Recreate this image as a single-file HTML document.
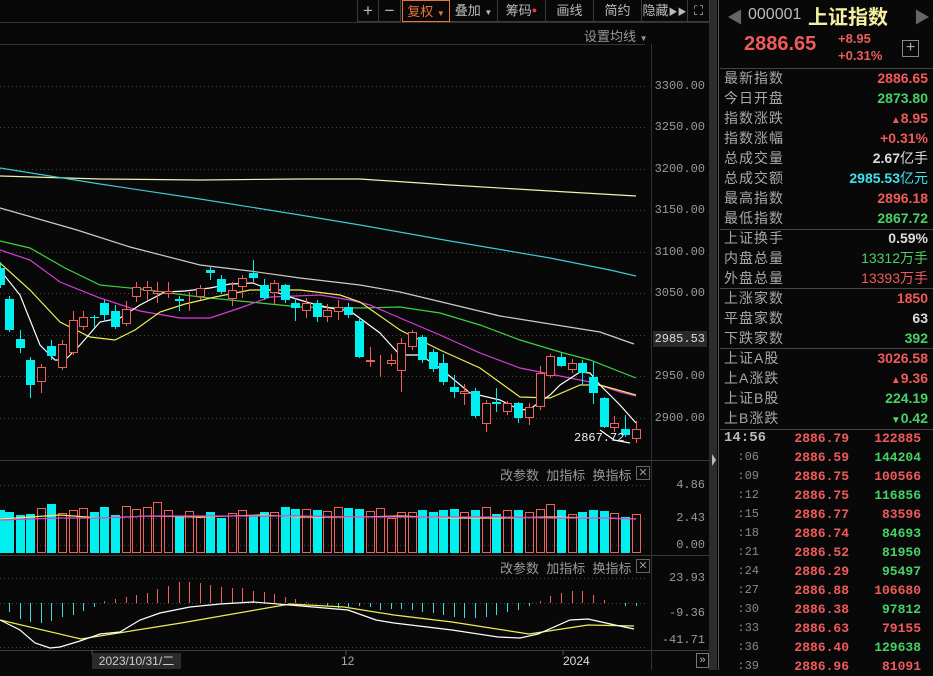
<!DOCTYPE html>
<html><head><meta charset="utf-8"><style>
*{margin:0;padding:0;box-sizing:border-box}
body{width:933px;height:670px;background:#080808;overflow:hidden;position:relative;font-family:"Liberation Sans","Noto Sans CJK SC",sans-serif;color:#aaa}
.a{position:absolute;white-space:nowrap}
.tb{position:absolute;top:0;height:22px;border-right:1px solid #3a3a3a;border-bottom:1px solid #3a3a3a;font-size:13px;color:#bbb;text-align:center;line-height:21px}
.r{position:absolute;left:718px;width:215px;height:20px;font-size:14px;line-height:20px}
.r .l{position:absolute;left:6px;color:#a8a8a8;letter-spacing:1px}
.r .v{position:absolute;right:5px;font-weight:bold}
.red{color:#f05a5a}.grn{color:#46d267}.cy{color:#3fe3ee}.wh{color:#ddd}
.t{position:absolute;left:718px;width:215px;height:19px;font-size:13px;line-height:19px;font-family:"Liberation Mono",monospace}
.t span{position:absolute}
.sep{position:absolute;left:720px;width:213px;height:1px;background:#444}
.ax{position:absolute;right:228px;font-family:"Liberation Mono",monospace;font-size:12px;color:#9a9a9a}
.btn{font-size:13px;color:#9a9a9a;position:absolute}
</style></head><body>
<svg id="s" width="933" height="670" style="position:absolute;left:0;top:0"></svg>

<!-- toolbar -->
<div class="tb" style="left:357px;width:22px;border-left:1px solid #3a3a3a;font-size:17px">+</div>
<div class="tb" style="left:379px;width:22px;font-size:17px">−</div>
<div class="tb" style="left:402px;width:48px;color:#e8753a;border:1px solid #e8753a">复权 <span style="font-size:8px">▼</span></div>
<div class="tb" style="left:450px;width:48px">叠加 <span style="font-size:8px">▼</span></div>
<div class="tb" style="left:498px;width:48px">筹码<span style="color:#f33;font-size:9px;vertical-align:top">●</span></div>
<div class="tb" style="left:546px;width:48px">画线</div>
<div class="tb" style="left:594px;width:48px">简约</div>
<div class="tb" style="left:642px;width:46px">隐藏<span style="font-size:9px">▶▶</span></div>
<div class="tb" style="left:688px;width:22px;font-size:13px">⛶</div>
<div class="a" style="left:584px;top:26px;font-size:13px;color:#9a9a9a">设置均线 <span style="font-size:8px">▼</span></div>

<!-- axis labels -->
<div class="ax" style="top:79px">3300.00</div>
<div class="ax" style="top:120px">3250.00</div>
<div class="ax" style="top:162px">3200.00</div>
<div class="ax" style="top:203px">3150.00</div>
<div class="ax" style="top:245px">3100.00</div>
<div class="ax" style="top:286px">3050.00</div>
<div class="a" style="left:653px;top:331px;width:54px;height:16px;background:#2a2a2a;font-family:'Liberation Mono',monospace;font-size:12px;color:#ddd;text-align:right;padding-right:2px;line-height:16px">2985.53</div>
<div class="ax" style="top:369px">2950.00</div>
<div class="ax" style="top:411px">2900.00</div>
<div class="a" style="left:574px;top:431px;font-family:'Liberation Mono',monospace;font-size:12px;color:#eee">2867.72</div>
<div class="ax" style="top:478px">4.86</div>
<div class="ax" style="top:511px">2.43</div>
<div class="ax" style="top:538px">0.00</div>
<div class="ax" style="top:571px">23.93</div>
<div class="ax" style="top:606px">-9.36</div>
<div class="ax" style="top:633px">-41.71</div>

<div class="btn" style="left:500px;top:465px">改参数 &nbsp;加指标 &nbsp;换指标</div>
<div class="a" style="left:636px;top:466px;width:14px;height:14px;border:1px solid #666;font-size:11px;line-height:12px;text-align:center;color:#999">✕</div>
<div class="btn" style="left:500px;top:558px">改参数 &nbsp;加指标 &nbsp;换指标</div>
<div class="a" style="left:636px;top:559px;width:14px;height:14px;border:1px solid #666;font-size:11px;line-height:12px;text-align:center;color:#999">✕</div>

<div class="a" style="left:92px;top:653px;width:89px;height:16px;background:#2b2b2b;font-size:12px;color:#ccc;text-align:center;line-height:16px">2023/10/31/二</div>
<div class="a" style="left:341px;top:654px;font-size:12px;color:#aaa">12</div>
<div class="a" style="left:563px;top:654px;font-size:12px;color:#ddd">2024</div>
<div class="a" style="left:696px;top:653px;width:13px;height:15px;border:1px solid #777;font-size:11px;line-height:13px;color:#bbb;text-align:center">»</div>

<!-- right panel -->
<div class="a" style="left:727px;top:4px;font-size:16px;color:#666">◀</div>
<div class="a" style="left:748px;top:6px;font-size:16px;color:#bbb;font-family:'Liberation Sans',sans-serif">000001</div>
<div class="a" style="left:808px;top:1px;font-size:20px;color:#f4f0a0;font-weight:bold">上证指数</div>
<div class="a" style="left:914px;top:4px;font-size:16px;color:#666">▶</div>
<div class="a" style="left:744px;top:33px;font-size:20px;color:#f05a5a;font-weight:bold">2886.65</div>
<div class="a" style="left:838px;top:30px;font-size:13px;color:#f05a5a;font-weight:bold;line-height:17px">+8.95<br>+0.31%</div>
<div class="a" style="left:902px;top:40px;width:17px;height:17px;border:1px solid #888;color:#aaa;font-size:16px;line-height:14px;text-align:center">+</div>
<div class="sep" style="top:68px"></div>
<div class="r" style="top:68px"><span class="l">最新指数</span><span class="v red">2886.65</span></div>
<div class="r" style="top:88px"><span class="l">今日开盘</span><span class="v grn">2873.80</span></div>
<div class="r" style="top:108px"><span class="l">指数涨跌</span><span class="v red"><span style="font-size:10px">▲</span>8.95</span></div>
<div class="r" style="top:128px"><span class="l">指数涨幅</span><span class="v red">+0.31%</span></div>
<div class="r" style="top:148px"><span class="l">总成交量</span><span class="v wh">2.67<span style="font-weight:normal">亿手</span></span></div>
<div class="r" style="top:168px"><span class="l">总成交额</span><span class="v cy">2985.53<span style="font-weight:normal">亿元</span></span></div>
<div class="r" style="top:188px"><span class="l">最高指数</span><span class="v red">2896.18</span></div>
<div class="r" style="top:208px"><span class="l">最低指数</span><span class="v grn">2867.72</span></div>
<div class="sep" style="top:229px"></div>
<div class="r" style="top:228px"><span class="l">上证换手</span><span class="v wh">0.59%</span></div>
<div class="r" style="top:248px"><span class="l">内盘总量</span><span class="v grn" style="font-weight:normal">13312万手</span></div>
<div class="r" style="top:268px"><span class="l">外盘总量</span><span class="v red" style="font-weight:normal">13393万手</span></div>
<div class="sep" style="top:288px"></div>
<div class="r" style="top:288px"><span class="l">上涨家数</span><span class="v red">1850</span></div>
<div class="r" style="top:308px"><span class="l">平盘家数</span><span class="v wh">63</span></div>
<div class="r" style="top:328px"><span class="l">下跌家数</span><span class="v grn">392</span></div>
<div class="sep" style="top:348px"></div>
<div class="r" style="top:348px"><span class="l">上证A股</span><span class="v red">3026.58</span></div>
<div class="r" style="top:368px"><span class="l">上A涨跌</span><span class="v red"><span style="font-size:10px">▲</span>9.36</span></div>
<div class="r" style="top:388px"><span class="l">上证B股</span><span class="v grn">224.19</span></div>
<div class="r" style="top:408px"><span class="l">上B涨跌</span><span class="v grn"><span style="font-size:10px">▼</span>0.42</span></div>
<div class="sep" style="top:429px"></div>
<div id="ticks"></div>

<script>
var s=document.getElementById('s'),h='';
function L(x1,y1,x2,y2,c,w,d){h+='<line x1="'+x1+'" y1="'+y1+'" x2="'+x2+'" y2="'+y2+'" stroke="'+c+'" stroke-width="'+(w||1)+'"'+(d?' stroke-dasharray="'+d+'"':'')+'/>';}
function P(pts,c){h+='<polyline fill="none" stroke="'+c+'" stroke-width="1.2" points="'+pts+'"/>';}
// frame lines
L(0,22.5,710,22.5,'#333');L(0,44.5,645,44.5,'#333');
L(651.5,44,651.5,670,'#333');
L(0,460.5,710,460.5,'#3a3a3a');L(0,555.5,710,555.5,'#3a3a3a');L(0,650.5,710,650.5,'#3a3a3a');
h+='<rect x="709" y="0" width="8" height="670" fill="#2c2c2c"/>';
h+='<polygon points="712,454 716,460 712,466" fill="#bbb"/>';
L(718.5,0,718.5,670,'#555');
[86,127,169,210,252,293,335,376,418].forEach(function(y){L(0,y+.5,648,y+.5,'#444',1,'1 3');});
[485,518,545,578,603,647].forEach(function(y){L(0,y+.5,648,y+.5,'#444',1,'1 3');});
// MAs
P('0,176 100,179 200,180 300,179 360,179 450,185 550,191 636,196','#f4f0b0');
P('0,168 100,184 200,199 300,215 360,225 450,241 550,258 610,270 636,276','#3fc8d8');
P('0,208 77,230 130,247 200,265 250,271 300,278 360,285 400,292 500,316 600,332 634,344','#ccc');
P('0,241 30,248 65,268 100,285 140,289 200,297 260,303 300,307 360,308 400,307 440,313 480,325 520,340 560,352 590,360 636,378','#3ed23e');
P('0,250 30,260 60,282 100,298 140,311 180,318 210,318 240,308 270,297 320,295 350,300 370,305 400,318 440,335 480,353 520,368 560,376 590,382 620,392 636,396','#d83cd8');
P('0,263 30,290 60,322 90,337 115,340 135,330 160,312 185,304 215,297 250,290 300,290 340,295 360,302 400,330 440,350 480,368 520,397 550,398 580,385 600,385 636,395','#eeee55');
P('0,270 20,295 40,345 55,360 65,360 80,345 100,322 120,318 140,305 165,292 185,291 210,288 230,284 253,283 270,290 290,297 310,303 330,308 350,311 380,333 400,355 420,355 440,368 470,393 500,400 520,410 530,409 550,395 560,385 580,372 590,373 600,385 620,405 636,423','#fff');
// candles: x, top, bottom, up(red), hi, lo
var C=[[0,268,285,0,262,288],[9,299,330,0,296,332],[20,339,348,0,330,353],[30,360,385,0,357,398],[41,367,382,1,364,393],[51,346,356,0,340,360],[62,344,368,1,340,370],[73,320,353,1,311,355],[83,317,327,1,311,330],[94,317,318,0,315,328],[104,303,315,0,300,322],[115,311,327,0,305,329],[126,309,324,1,301,326],[136,287,297,1,282,302],[147,287,291,1,281,300],[157,291,294,1,282,303],[168,291,294,1,282,298],[179,299,301,0,296,311],[189,297,298,1,292,311],[200,288,297,1,285,300],[210,270,273,0,266,280],[221,279,292,0,275,294],[232,290,299,1,282,306],[242,278,287,1,275,298],[253,273,278,0,260,282],[264,285,298,0,279,300],[274,283,293,1,280,304],[285,285,300,0,284,303],[295,303,308,0,298,321],[306,303,311,1,298,318],[317,303,317,0,300,322],[327,310,317,1,304,322],[338,307,312,1,300,320],[348,307,315,0,303,318],[359,321,357,0,318,358],[370,360,362,1,347,367],[380,363,364,1,355,377],[391,360,364,1,354,366],[401,343,371,1,338,392],[412,332,347,1,330,350],[422,337,360,0,335,363],[433,352,369,0,349,372],[443,363,382,0,354,385],[454,387,392,0,375,398],[464,391,394,1,384,405],[475,391,416,0,388,418],[486,403,424,1,400,432],[496,402,404,0,388,412],[507,403,412,1,401,415],[518,403,418,0,402,423],[529,407,418,1,403,425],[540,373,407,1,366,410],[550,356,376,1,354,378],[561,357,366,0,353,367],[572,363,370,1,359,373],[582,363,373,0,360,385],[593,377,393,0,362,404],[604,398,427,0,397,428],[614,423,428,1,416,432],[625,429,435,0,415,437],[636,429,439,1,421,443]];
var vol=[510,512,515,514,508,504,513,510,508,512,507,515,506,509,507,502,510,517,511,517,512,518,513,510,516,512,512,507,509,509,510,511,507,508,509,511,508,518,512,512,510,512,510,509,512,510,507,514,510,510,512,509,504,510,514,512,510,511,513,517,514];
var macd=[0,9,16,19,20,18,14,12,8,4,-2,-4,-6,-8,-10,-14,-17,-21,-21,-20,-18,-16,-15,-15,-12,-11,-9,-6,-4,-1,0,3,5,4,3,4,7,6,6,7,9,10,12,14,15,15,14,12,9,7,3,-2,-7,-10,-12,-12,-8,-3,0,3,3];
C.forEach(function(c,i){
 var x=c[0],red=c[3],col=red?'#f0605a':'#00f0f0';
 L(x+.5,c[4],x+.5,c[5],col);
 var ht=Math.max(1,c[2]-c[1]);
 if(red)h+='<rect x="'+(x-3.5)+'" y="'+(c[1]+.5)+'" width="8" height="'+(ht-1)+'" fill="#080808" stroke="'+col+'"/>';
 else h+='<rect x="'+(x-4)+'" y="'+c[1]+'" width="9" height="'+ht+'" fill="'+col+'"/>';
 var vt=vol[i]||512;
 if(red)h+='<rect x="'+(x-3.5)+'" y="'+(vt+.5)+'" width="8" height="'+(552-vt)+'" fill="none" stroke="'+col+'"/>';
 else h+='<rect x="'+(x-4)+'" y="'+vt+'" width="9" height="'+(553-vt)+'" fill="'+col+'"/>';
 var m=macd[i]||0;
 if(m!==0)L(x+.5,603,x+.5,603+m,m>0?'#3fd8e0':'#f0605a');
});
P('0,519 60,515 100,518 150,516 200,517 260,515 300,517 360,517 400,516 450,518 500,518 550,517 600,518 636,519','#eeee55');
P('0,520 60,518 100,518 150,516 200,516 260,516 300,516 360,517 400,517 450,517 500,517 550,518 600,518 636,519','#d83cd8');
P('0,620 81,639 181,623 290,604 344,607 394,615 452,622 529,634 588,625 634,626','#eeee55');
P('0,620 20,630 35,643 50,648 60,647 80,641 100,634 120,632 140,620 160,613 190,607 220,604 253,602 290,605 348,610 376,620 394,623 452,630 498,637 520,638 538,634 570,620 588,619 615,625 634,629','#fff');
P('600,430 614,440 630,443','#fff');
L(92,650,92,655,'#555');L(346,650,346,655,'#555');L(563,650,563,655,'#555');
s.innerHTML=h;
// ticks
var T=[['14:56','2886.79','122885',1,1],[':06','2886.59','144204',0,0],[':09','2886.75','100566',1,0],[':12','2886.75','116856',0,0],[':15','2886.77','83596',1,0],[':18','2886.74','84693',0,0],[':21','2886.52','81950',0,0],[':24','2886.29','95497',0,0],[':27','2886.88','106680',1,0],[':30','2886.38','97812',0,0],[':33','2886.63','79155',1,0],[':36','2886.40','129638',0,0],[':39','2886.96','81091',1,0]];
var th='';
T.forEach(function(t,i){
 var y=429+i*19;
 th+='<div class="t" style="top:'+y+'px"><span style="'+(t[4]?'left:6px;color:#bbb;font-weight:bold;font-size:14px':'right:174px;color:#888;font-size:12px')+'">'+t[0]+'</span><span style="right:84px;color:#f05a5a;font-weight:bold">'+t[1]+'</span><span style="right:12px;font-weight:bold;color:'+(t[3]?'#f05a5a':'#46d267')+'">'+t[2]+'</span></div>';
});
document.getElementById('ticks').innerHTML=th;
</script>
</body></html>
